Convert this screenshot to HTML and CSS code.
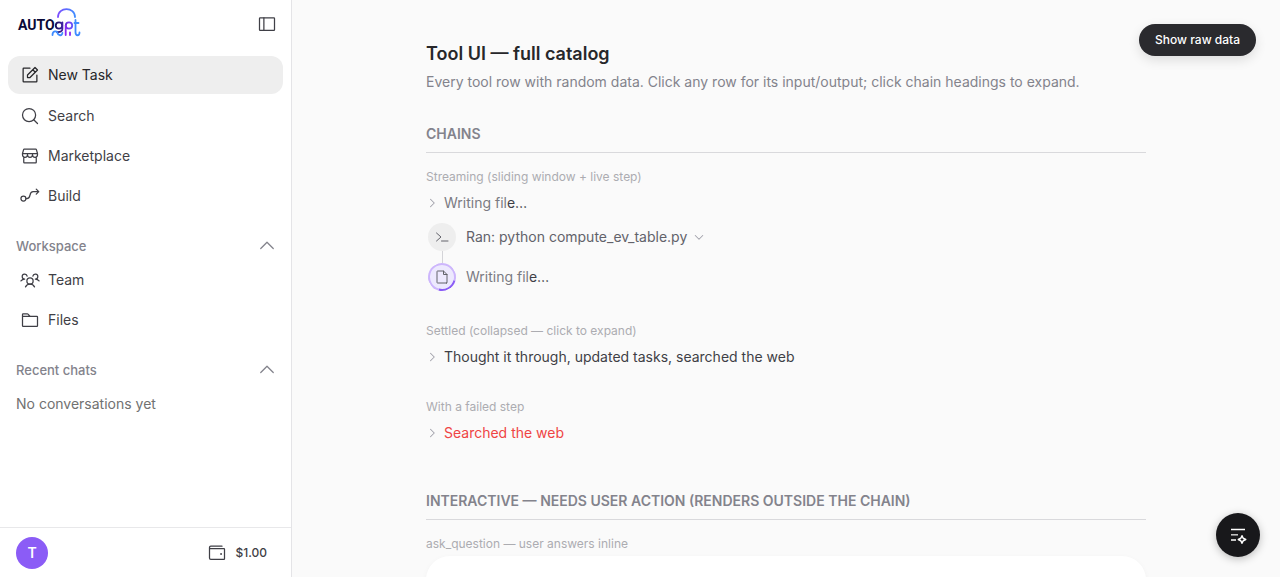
FILE: index.html
```html
<!DOCTYPE html>
<html lang="en">
<head>
<meta charset="utf-8">
<meta name="viewport" content="width=device-width, initial-scale=1">
<title>Tool UI — full catalog</title>
<link rel="stylesheet" href="styles.css">
</head>
<body>
<div class="app">
  <aside class="sidebar">
    <header class="sidebar-head">
      <a class="logo" href="#" aria-label="AutoGPT home">
        <svg width="64" height="32" viewBox="0 0 64 32">
          <defs>
            <linearGradient id="arc" x1="0" x2="1"><stop offset="0" stop-color="#7b4dff"/><stop offset="1" stop-color="#3f8cff"/></linearGradient>
            <linearGradient id="word" gradientUnits="userSpaceOnUse" x1="36" y1="0" x2="62" y2="0"><stop offset="0" stop-color="#0b0a3c"/><stop offset=".35" stop-color="#3a1f9c"/><stop offset=".6" stop-color="#7a35f5"/><stop offset="1" stop-color="#3f8cff"/></linearGradient>
          </defs>
          <text class="logo-auto" x="1" y="22">AUTO</text>
          <g fill="none" stroke-width="1.8" stroke-linecap="round">
            <path stroke="url(#arc)" d="M41 9C41 -1.500 58 -1.500 58 9"/>
            <circle stroke="url(#word)" cx="42" cy="17.500" r="3.200"/>
            <path stroke="url(#word)" d="M45.400 14.500V21C45.400 23.500 43 24.300 40 24"/>
            <circle stroke="url(#word)" cx="52" cy="17.500" r="3.200"/>
            <path stroke="#8a28f2" d="M48.700 17.500V27M53 24.500V27"/>
            <path stroke="#3f8cff" d="M35.500 27C35.500 22.500 40 22.500 40.500 25S45 28.500 45.400 25"/>
            <path stroke="#3f8cff" d="M58.500 12V24C58.500 28.500 62.500 28 62.500 24.500M57.500 15H61.500"/>
          </g>
        </svg>
      </a>
      <button class="icon-button" aria-label="Toggle sidebar">
        <svg class="icon" viewBox="0 0 256 256"><rect x="32" y="48" width="192" height="160" rx="8"/><path d="M88 48V208"/></svg>
      </button>
    </header>

    <nav class="nav">
      <a class="nav-item active" href="#"><svg class="icon" viewBox="0 0 256 256"><path d="M128 160H96V128L192 32L224 64ZM164 60L196 92M216 128.600V208a8 8 0 0 1-8 8H48a8 8 0 0 1-8-8V48a8 8 0 0 1 8-8h79.400"/></svg>New Task</a>
      <a class="nav-item" href="#"><svg class="icon" viewBox="0 0 256 256"><circle cx="116" cy="116" r="84"/><path d="M175.400 175.400L224 224"/></svg>Search</a>
      <a class="nav-item" href="#"><svg class="icon" viewBox="0 0 256 256"><path d="M48 139.600V208a8 8 0 0 0 8 8H200a8 8 0 0 0 8-8V139.600M54 40H202a8 8 0 0 1 7.700 5.800L224 96H32L46.300 45.800A8 8 0 0 1 54 40ZM96 96v16a32 32 0 0 1-64 0V96M160 96v16a32 32 0 0 1-64 0V96M224 96v16a32 32 0 0 1-64 0V96"/></svg>Marketplace</a>
      <a class="nav-item" href="#"><svg class="icon" viewBox="0 0 256 256"><circle cx="44" cy="160" r="32"/><path d="M76 160H88C152 160 104 72 168 72H240M208 40L240 72L208 104"/></svg>Build</a>
    </nav>

    <section class="group">
      <button class="group-head" aria-expanded="true">Workspace<svg class="icon" viewBox="0 0 256 256"><path d="M48 160L128 80L208 160"/></svg></button>
      <nav class="nav">
        <a class="nav-item" href="#"><svg class="icon" viewBox="0 0 256 256"><circle cx="128" cy="140" r="40"/><path d="M196 116a59.800 59.800 0 0 1 48 24M12 140a59.800 59.800 0 0 1 48-24M70.400 216a64.100 64.100 0 0 1 115.200 0M60 116A32 32 0 1 1 91.400 78M164.600 78A32 32 0 1 1 196 116"/></svg>Team</a>
        <a class="nav-item" href="#"><svg class="icon" viewBox="0 0 256 256"><path d="M128 80L98.300 50.300A8 8 0 0 0 92.700 48H40a8 8 0 0 0-8 8V80H216a8 8 0 0 1 8 8V200a8 8 0 0 1-8 8H40a8 8 0 0 1-8-8V80"/></svg>Files</a>
      </nav>
    </section>

    <section class="group">
      <button class="group-head" aria-expanded="true">Recent chats<svg class="icon" viewBox="0 0 256 256"><path d="M48 160L128 80L208 160"/></svg></button>
      <p class="empty">No conversations yet</p>
    </section>

    <footer class="sidebar-foot">
      <button class="avatar" aria-label="Account">T</button>
      <a class="balance" href="#"><svg class="icon" viewBox="0 0 256 256"><path d="M32 56V192a16 16 0 0 0 16 16H216a8 8 0 0 0 8-8V80a8 8 0 0 0-8-8H48A16 16 0 0 1 32 56A16 16 0 0 1 48 40H192"/><circle class="dot" cx="180" cy="140" r="12"/></svg>$1.00</a>
    </footer>
  </aside>

  <main class="main">
    <button class="raw-button">Show raw data</button>
    <div class="content">
      <header>
        <h1 class="title">Tool UI — full catalog</h1>
        <p class="subtitle">Every tool row with random data. Click any row for its input/output; click chain headings to expand.</p>
      </header>

      <section class="section">
        <h2 class="section-title">Chains</h2>
        <div class="example">
          <p class="label">Streaming (sliding window + live step)</p>
          <button class="chain live"><svg class="caret" viewBox="0 0 256 256"><path d="M96 48L176 128L96 208"/></svg><span>Writing fil<span class="shine">e…</span></span></button>
          <ol class="steps">
            <li class="step"><span class="badge"><svg class="icon small" viewBox="0 0 256 256"><path d="M40 64L112 128L40 192M120 192H224"/></svg></span><button class="step-name">Ran: python compute_ev_table.py<svg class="caret" viewBox="0 0 256 256"><path d="M48 96L128 176L208 96"/></svg></button></li>
            <li class="step live"><span class="badge running"><svg class="icon small" viewBox="0 0 256 256"><path d="M200 224H56a8 8 0 0 1-8-8V40a8 8 0 0 1 8-8h96l56 56V216A8 8 0 0 1 200 224ZM152 32V88H208"/></svg></span><span>Writing fil<span class="shine">e…</span></span></li>
          </ol>
        </div>
        <div class="example">
          <p class="label">Settled (collapsed — click to expand)</p>
          <button class="chain"><svg class="caret" viewBox="0 0 256 256"><path d="M96 48L176 128L96 208"/></svg>Thought it through, updated tasks, searched the web</button>
        </div>
        <div class="example">
          <p class="label">With a failed step</p>
          <button class="chain failed"><svg class="caret" viewBox="0 0 256 256"><path d="M96 48L176 128L96 208"/></svg>Searched the web</button>
        </div>
      </section>

      <section class="section">
        <h2 class="section-title">Interactive — needs user action (renders outside the chain)</h2>
        <div class="example tight">
          <p class="label">ask_question — user answers inline</p>
          <div class="card"></div>
        </div>
      </section>
    </div>
    <button class="fab" aria-label="Open tools">
      <svg width="18" height="18" viewBox="0 0 18 18" fill="none" stroke="#fff" stroke-width="1.500"><path d="M2 3.500H16M2 14H7"/><path d="M2 8.800H9" stroke="#ccc"/><path d="M13 9.800L14.200 12.300L16.700 13.500L14.200 14.700L13 17.200L11.800 14.700L9.300 13.500L11.800 12.300Z" stroke-linejoin="round"/></svg>
    </button>
  </main>
</div>
</body>
</html>
```
FILE: styles.css
```css
* { box-sizing: border-box; }

body {
  margin: 0;
  font-family: Inter, "Liberation Sans", sans-serif;
  font-size: 14px;
  line-height: 20px;
  color: #3f3f46;
}

h1, h2, p, ol { margin: 0; padding: 0; }
ol { list-style: none; }
a { color: inherit; text-decoration: none; }

button {
  margin: 0;
  padding: 0;
  border: 0;
  background: none;
  font: inherit;
  color: inherit;
  cursor: pointer;
}

.icon, .caret {
  flex: none;
  width: 20px;
  height: 20px;
  fill: none;
  stroke: currentColor;
  stroke-width: 16;
  stroke-linecap: round;
  stroke-linejoin: round;
}
.icon.small { width: 16px; height: 16px; }
.icon .dot { fill: currentColor; stroke: none; }
.caret { width: 12px; height: 12px; color: #a1a1aa; stroke-width: 22; }

.app { display: flex; height: 100vh; }

.sidebar {
  display: flex;
  flex-direction: column;
  flex: none;
  width: 292px;
  background: #fff;
  border-right: 1px solid #e4e4e7;
}
.sidebar-head {
  display: flex;
  align-items: center;
  justify-content: space-between;
  height: 48px;
  margin-bottom: 8px;
  padding: 0 14px 0 17px;
}
.logo, .icon-button, .logo svg { display: block; }
.logo svg { overflow: visible; }
.icon-button { height: 20px; }
.logo-auto { font-family: Roboto, sans-serif; font-size: 14px; font-weight: 700; fill: #0a0938; }

.nav { display: flex; flex-direction: column; gap: 4px; padding: 0 8px; }
.nav-item {
  display: flex;
  align-items: center;
  gap: 8px;
  padding: 8px 12px;
  border-radius: 12px;
}
.nav-item.active { padding: 9px 12px; background: #eee; color: #27272a; }

.group { padding-top: 22px; }
.group-head {
  display: flex;
  align-items: center;
  justify-content: space-between;
  width: 100%;
  padding: 0 14px 0 16px;
  margin-bottom: 6px;
  font-size: 13px;
  font-weight: 500;
  color: #83838c;
}
.empty { padding: 8px 16px; color: #717171; }

.sidebar-foot {
  display: flex;
  align-items: center;
  justify-content: space-between;
  margin-top: auto;
  padding: 9px 24px 8px 16px;
  border-top: 1px solid #e8e8ea;
}
.avatar {
  width: 32px;
  height: 32px;
  border-radius: 50%;
  background: #8b5cf6;
  color: #fff;
  font-weight: 600;
}
.balance { display: flex; align-items: center; gap: 8px; font-size: 12px; font-weight: 500; }

.main {
  position: relative;
  flex: 1;
  min-width: 0;
  padding: 0 24px;
  overflow: hidden;
  background: #fafafa;
}
.content { max-width: 720px; margin: 0 auto; padding-top: 40px; }
.title { font-size: 18px; line-height: 28px; font-weight: 600; color: #27272a; }
.subtitle { margin-top: 4px; color: #83838c; }

.section { margin-top: 32px; }
.section + .section { margin-top: 48px; }
.section-title {
  padding-bottom: 8px;
  border-bottom: 1px solid #d9d9dc;
  font-size: 14px;
  line-height: 20px;
  font-weight: 600;
  color: #83838c;
  text-transform: uppercase;
}
.example { margin-top: 16px; }
.example + .example { margin-top: 32px; }
.label { margin-bottom: 8px; font-size: 12px; line-height: 16px; color: #acacb1; }
.tight .label { margin-bottom: 4px; }

.chain { display: flex; align-items: center; gap: 6px; }
.live { color: #7a7a82; }
.shine { color: #3f3f46; }
.failed { color: #ef4444; }

.steps { display: grid; gap: 12px; margin-top: 10px; padding-left: 2px; }
.step { display: flex; align-items: center; gap: 10px; }
.step-name { display: flex; align-items: center; gap: 6px; color: #62626a; }
.badge {
  position: relative;
  display: grid;
  place-items: center;
  width: 28px;
  height: 28px;
  border-radius: 50%;
  background: #eee;
  color: #62626a;
}
.step:first-child .badge::after {
  content: "";
  position: absolute;
  top: 100%;
  left: 14px;
  width: 1px;
  height: 12px;
  background: #d4d4d8;
}
.running {
  border: 2px solid #cdb6fc;
  border-bottom-color: #8b5cf6;
  background: #ede9fe;
  rotate: -30deg;
}
.running .icon { rotate: 30deg; }

.card {
  height: 160px;
  border-radius: 24px;
  background: #fff;
  box-shadow: 0 2px 6px rgba(0, 0, 0, .04);
}

.raw-button {
  position: absolute;
  top: 24px;
  right: 24px;
  padding: 8px 16px;
  border-radius: 16px;
  background: #2a2a2e;
  color: #fff;
  font-size: 12px;
  line-height: 16px;
  font-weight: 500;
  box-shadow: 0 4px 12px rgba(0, 0, 0, .12);
}
.fab {
  position: absolute;
  right: 20px;
  bottom: 20px;
  display: grid;
  place-items: center;
  width: 44px;
  height: 44px;
  border-radius: 50%;
  background: #18181b;
  box-shadow: 0 2px 8px rgba(0, 0, 0, .25);
}
```
